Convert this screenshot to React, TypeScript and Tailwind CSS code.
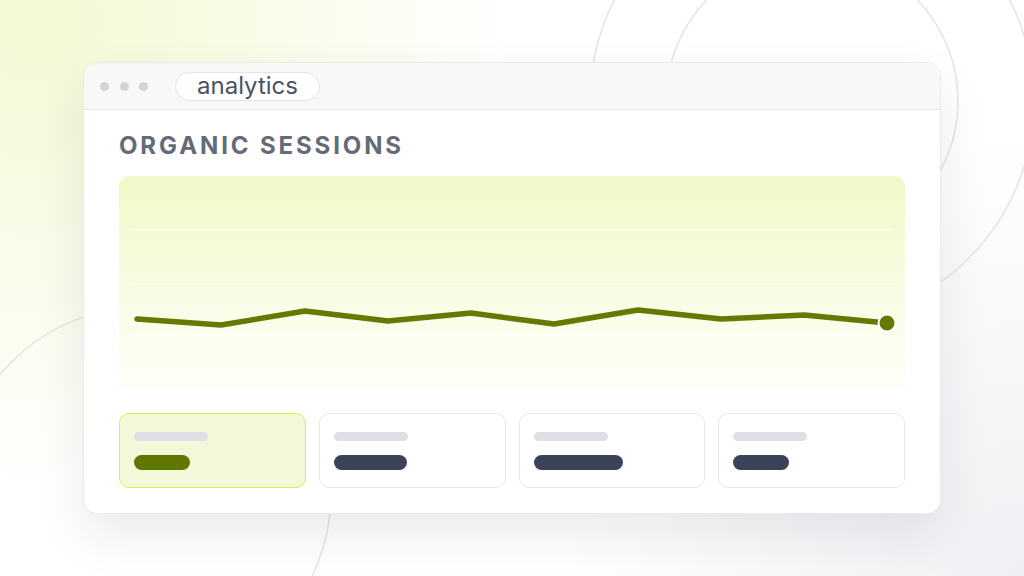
const points = [
  [18, 143],
  [102, 149],
  [186, 135],
  [269, 145],
  [352, 137],
  [435, 148],
  [519, 134],
  [602, 143],
  [685, 139],
  [768, 147],
];

const stats = [
  { value: "w-[56px]", active: true },
  { value: "w-[73px]", active: false },
  { value: "w-[89px]", active: false },
  { value: "w-[56px]", active: false },
];

const Backdrop = () => (
  <svg
    className="absolute inset-0 pointer-events-none"
    width="1024"
    height="576"
    viewBox="0 0 1024 576"
    fill="none"
  >
    <circle cx="812" cy="101" r="222" stroke="#e4e4e0" strokeWidth="1.5" />
    <circle cx="812" cy="101" r="146" stroke="#e4e4e0" strokeWidth="1.5" />
    <circle cx="144" cy="494" r="187" stroke="#e4e4e0" strokeWidth="1.5" />
  </svg>
);

const SessionsChart = () => {
  const d = points.map(([x, y], i) => `${i === 0 ? "M" : "L"}${x} ${y}`).join(" ");
  const [lx, ly] = points[points.length - 1];
  return (
    <div className="relative h-[214px] rounded-[10px] bg-linear-to-b from-[#f2f8c8] to-[#fefff9]">
      <svg className="absolute inset-0" width="787" height="214" viewBox="0 0 787 214" fill="none">
        <line x1="12" y1="54" x2="775" y2="54" stroke="#ffffff" strokeOpacity="0.8" strokeWidth="1.2" />
        <line x1="12" y1="108" x2="775" y2="108" stroke="#ffffff" strokeOpacity="0.8" strokeWidth="1.2" />
        <line x1="12" y1="159" x2="775" y2="159" stroke="#ffffff" strokeOpacity="0.8" strokeWidth="1.2" />
        <path d={d} stroke="#637a00" strokeWidth="5.5" strokeLinecap="round" strokeLinejoin="round" />
        <circle cx={lx} cy={ly} r="8.5" fill="#637a00" stroke="#ffffff" strokeWidth="2" />
      </svg>
    </div>
  );
};

const StatCard = ({ value, active }: { value: string; active: boolean }) => (
  <div
    className={
      active
        ? "h-[75px] rounded-[10px] border-[1.5px] border-[#d9f048] bg-[#f2f8d8] pl-[14px] pt-[18px]"
        : "h-[75px] rounded-[10px] border-[1.5px] border-[#e8e8e3] bg-white pl-[14px] pt-[18px]"
    }
  >
    <div className="h-[9px] w-[74px] rounded-full bg-[#dfe0e6]" />
    <div
      className={`mt-[14px] h-[15px] rounded-full ${value} ${active ? "bg-[#5f7600]" : "bg-[#3b4358]"}`}
    />
  </div>
);

export default function App() {
  return (
    <div
      className="relative w-[1024px] h-[576px] overflow-hidden bg-white bg-[image:radial-gradient(circle_at_4%_4%,#f2f9d4_0%,rgba(255,255,255,0)_42%),radial-gradient(circle_at_100%_100%,#eef0f3_0%,rgba(255,255,255,0)_38%)]"
      style={{ fontFamily: "Inter, 'Noto Sans', sans-serif" }}
    >
      <Backdrop />
      <div className="relative pl-[83px] pt-[62px]">
        <div className="w-[858px] overflow-hidden rounded-[14px] border border-[#ebebe6] bg-white shadow-[0_22px_50px_rgba(30,35,50,0.09)]">
          <div className="flex h-[47px] items-center border-b border-[#e8e8e4] bg-[#f8f8f7] pl-[16px]">
            <div className="flex gap-[10.5px]">
              <span className="h-[9px] w-[9px] rounded-full bg-[#d3d4da]" />
              <span className="h-[9px] w-[9px] rounded-full bg-[#d3d4da]" />
              <span className="h-[9px] w-[9px] rounded-full bg-[#d3d4da]" />
            </div>
            <div className="ml-[27px] flex h-[29px] items-center rounded-full border border-[#e3e3df] bg-white px-[21px] text-[24px] leading-none text-[#4b5263]">
              analytics
            </div>
          </div>
          <div className="pl-[35px] pr-[35px] pt-[22px] pb-[25px]">
            <h1 className="text-[24px] font-bold leading-[28px] tracking-[0.12em] text-[#646b78]">
              ORGANIC SESSIONS
            </h1>
            <div className="mt-[16px]">
              <SessionsChart />
            </div>
            <div className="mt-[23px] grid grid-cols-4 gap-[13px]">
              {stats.map((s, i) => (
                <StatCard key={i} value={s.value} active={s.active} />
              ))}
            </div>
          </div>
        </div>
      </div>
    </div>
  );
}
